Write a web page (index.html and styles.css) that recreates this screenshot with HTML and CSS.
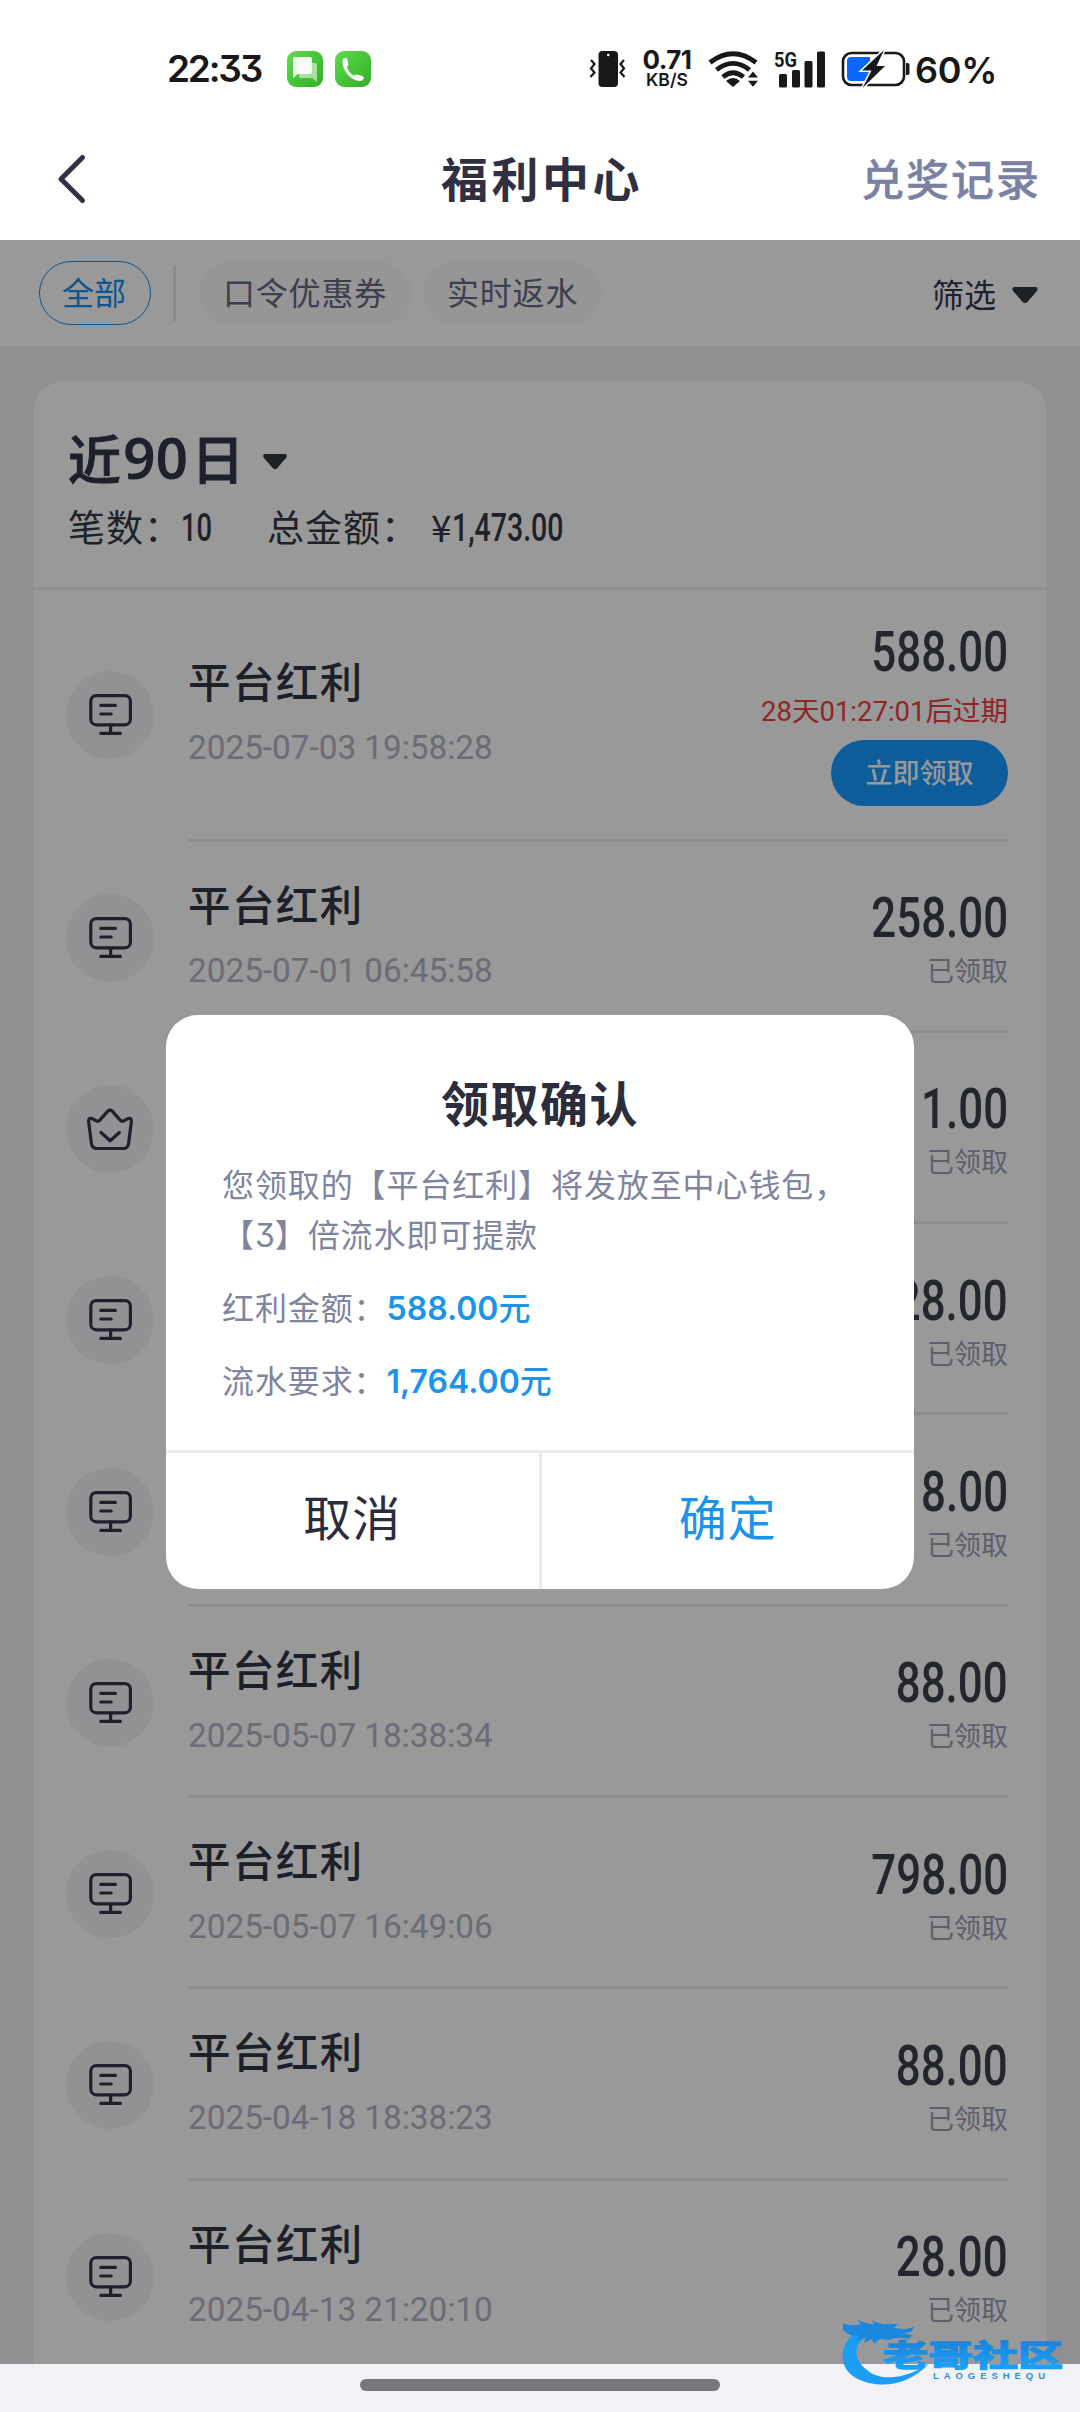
FILE: index.html
```html
<!DOCTYPE html>
<html lang="zh-CN">
<head>
<meta charset="utf-8">
<title>福利中心</title>
<link rel="stylesheet" href="styles.css">
</head>
<body>
<svg class="defs" width="0" height="0">
  <symbol id="monitor" viewBox="0 0 88 88">
    <g fill="none" stroke="#32374a" stroke-width="3.2" stroke-linecap="round">
      <rect x="24.8" y="24.6" width="39.6" height="29.2" rx="5.5"/>
      <path d="M34.8 34.4h14.6M34.8 43h10.4M44.6 54v8.2M34.8 62.4h19.6"/>
    </g>
  </symbol>
  <symbol id="crown" viewBox="0 0 88 88">
    <path d="M27.5 62.5q-1.600-1-2-3.500L22.600 36.500q-.2-4 3.200-3l5 2.600q1.600.500 3-1l8-9q2.200-2.200 4.400 0l8 9q1.400 1.500 3 1l5-2.600q3.400-1 3.200 3L62.500 59q-.400 2.500-2 3.500q-1 1-3 1H30.500q-2 0-3-1zM35 47.500l9.200 8.300 9.200-8.300" fill="none" stroke="#32374a" stroke-width="3.2" stroke-linecap="round" stroke-linejoin="round"/>
  </symbol>
  <symbol id="caret" viewBox="0 0 26 17">
    <path d="M3 2h20q1.500.5.5 2L14.500 14.400q-1.500 1.200-3 0L2.500 4q-1-1.500.5-2z" fill="#32373d" stroke="#32373d" stroke-width="2" stroke-linejoin="round"/>
  </symbol>
</svg>

<header class="status">
  <span class="clock">22:33</span>
  <svg class="apps" width="86" height="40" viewBox="0 0 86 40">
    <defs>
      <linearGradient id="green" x1="0" y1="0" x2="1" y2="1"><stop offset="0" stop-color="#5fdc4e"/><stop offset="1" stop-color="#32ad25"/></linearGradient>
    </defs>
    <rect x="1" y="2" width="36" height="36" rx="9" fill="url(#green)"/>
    <path d="M14 14h15q2 0 2 2v17l-5-4H15q-2 0-2-2z" fill="#fff" opacity=".55"/>
    <path d="M9 8h15q2 0 2 2v13q0 2-2 2H12l-5 4V10q0-2 2-2z" fill="#fff" opacity=".93"/>
    <rect x="49" y="2" width="36" height="36" rx="9" fill="url(#green)"/>
    <path d="M56.500 11q.5-2 2.800-2.300 1.700 0 2.200 1.800l.8 5q0 1.500-1.500 2.500 2 6 7.500 8.700 1.500-1.500 3-1.200l5 1.600q2 .8 1.500 2.300-1 2.500-4.500 2.600C64 31 56 21 56.500 11z" fill="#fff"/>
  </svg>
  <span class="grow"></span>
  <svg class="vibrate" width="38" height="38" viewBox="0 0 38 38">
    <rect x="9.500" y="1" width="19.500" height="36" rx="4" fill="#181818"/><circle cx="19.300" cy="5" r="1.300" fill="#fff"/>
    <path d="M2 10l3.500 4L2 18.500l3.500 4L1.500 27M35 10l-3.500 4 3.500 4.500-3.500 4 4 4.500" fill="none" stroke="#181818" stroke-width="2.200"/>
  </svg>
  <span class="speed"><b>0.71</b><small>KB/S</small></span>
  <svg class="wifi" width="52" height="38" viewBox="0 0 52 38">
    <g fill="none" stroke="#181818" stroke-width="4.800"><path d="M2 12.500Q25 -5 48 12.500"/><path d="M8.500 19.800Q25 7 41.500 19.800"/><path d="M14.800 27Q25 18.500 35.500 27"/></g>
    <path d="M18 31q7-6 14 0l-7 6zM40 27.500l5-6 5 6zM40 30.800l5 6 5-6z" fill="#181818"/>
  </svg>
  <svg class="signal" width="54" height="40" viewBox="0 0 54 40">
    <text x="1" y="17.500" font-family="Roboto" font-size="21" font-weight="700" textLength="23" lengthAdjust="spacingAndGlyphs" fill="#181818">5G</text>
    <path d="M7.500 25h5q1.500 0 1.500 1.500V37q0 1.500-1.500 1.500h-5Q6 38.500 6 37V26.500Q6 25 7.500 25zM20.500 21h5q1.500 0 1.500 1.500V37q0 1.500-1.500 1.500h-5Q19 38.500 19 37V22.500q0-1.500 1.500-1.500zM33 12h5q1.500 0 1.500 1.500V37q0 1.500-1.500 1.500h-5q-1.500 0-1.500-1.500V13.500Q31.500 12 33 12zM45.500 2.500h5Q52 2.500 52 4v33q0 1.500-1.500 1.500h-5Q44 38.500 44 37V4q0-1.500 1.500-1.500z" fill="#181818"/>
  </svg>
  <svg class="battery" width="70" height="40" viewBox="0 0 70 40">
    <rect x="2" y="4" width="61" height="32" rx="8.500" fill="#fff" stroke="#181818" stroke-width="2.600"/>
    <path d="M65 14h1.500q2 0 2 2v8q0 2-2 2H65z" fill="#181818"/>
    <path d="M10 8h19v24H10q-4 0-4-4V12q0-4 4-4z" fill="#0a66ff"/>
    <path d="M43 1L21 21.500h9.500L21.500 39 44 17h-8.500z" fill="#181818" stroke="#fff" stroke-width="3" paint-order="stroke"/>
  </svg>
  <span class="percent">60%</span>
</header>

<nav class="navbar">
  <svg width="34" height="52" viewBox="0 0 34 52"><path d="M28.500 4.500L7 26l21.500 21.500" fill="none" stroke="#2f3142" stroke-width="5" stroke-linecap="round" stroke-linejoin="round"/></svg>
  <h1>福利中心</h1>
  <a class="history">兑奖记录</a>
</nav>

<main class="content">
  <section class="filters">
    <span class="pill active">全部</span>
    <i class="sep"></i>
    <span class="pill">口令优惠券</span>
    <span class="pill">实时返水</span>
    <span class="filter">筛选<svg width="28" height="18"><use href="#caret"/></svg></span>
  </section>

  <section class="card">
    <div class="summary">
      <div class="range">近<b>90</b>日<svg width="26" height="17"><use href="#caret"/></svg></div>
      <div class="totals"><span>笔数：</span><span class="num n1">10</span><span class="total">总金额：</span><span class="yen">¥</span><span class="num n2">1,473.00</span></div>
    </div>

    <article class="row first"><svg class="ico"><use href="#monitor"/></svg>
      <div class="body"><div class="info"><h3>平台红利</h3><time>2025-07-03 19:58:28</time></div>
      <div class="side"><strong>588.00</strong><em>28天01:27:01后过期</em><button>立即领取</button></div></div></article>
    <article class="row"><svg class="ico"><use href="#monitor"/></svg>
      <div class="body"><div class="info"><h3>平台红利</h3><time>2025-07-01 06:45:58</time></div>
      <div class="side"><strong>258.00</strong><span>已领取</span></div></div></article>
    <article class="row"><svg class="ico"><use href="#crown"/></svg>
      <div class="body"><div class="info"></div>
      <div class="side"><strong>1.00</strong><span>已领取</span></div></div></article>
    <article class="row"><svg class="ico"><use href="#monitor"/></svg>
      <div class="body"><div class="info"></div>
      <div class="side"><strong>28.00</strong><span>已领取</span></div></div></article>
    <article class="row"><svg class="ico"><use href="#monitor"/></svg>
      <div class="body"><div class="info"></div>
      <div class="side"><strong>8.00</strong><span>已领取</span></div></div></article>
    <article class="row"><svg class="ico"><use href="#monitor"/></svg>
      <div class="body"><div class="info"><h3>平台红利</h3><time>2025-05-07 18:38:34</time></div>
      <div class="side"><strong>88.00</strong><span>已领取</span></div></div></article>
    <article class="row"><svg class="ico"><use href="#monitor"/></svg>
      <div class="body"><div class="info"><h3>平台红利</h3><time>2025-05-07 16:49:06</time></div>
      <div class="side"><strong>798.00</strong><span>已领取</span></div></div></article>
    <article class="row"><svg class="ico"><use href="#monitor"/></svg>
      <div class="body"><div class="info"><h3>平台红利</h3><time>2025-04-18 18:38:23</time></div>
      <div class="side"><strong>88.00</strong><span>已领取</span></div></div></article>
    <article class="row"><svg class="ico"><use href="#monitor"/></svg>
      <div class="body"><div class="info"><h3>平台红利</h3><time>2025-04-13 21:20:10</time></div>
      <div class="side"><strong>28.00</strong><span>已领取</span></div></div></article>
  </section>

  <div class="overlay">
    <div class="dialog">
      <div class="message">
        <h2>领取确认</h2>
        <p>您领取的【平台红利】将发放至中心钱包，<br>【<i>3</i>】倍流水即可提款</p>
        <p class="line">红利金额：<b>588.00<span>元</span></b></p>
        <p class="line">流水要求：<b>1,764.00<span>元</span></b></p>
      </div>
      <div class="actions"><a>取消</a><a class="ok">确定</a></div>
    </div>
  </div>
</main>

<footer class="home"><i></i></footer>

<svg class="watermark" width="236" height="90" viewBox="0 0 236 90">
  <defs>
    <linearGradient id="blue" x1="0" y1="0" x2="0" y2="1"><stop offset="0" stop-color="#1a78cf"/><stop offset="1" stop-color="#1aa8ff"/></linearGradient>
  </defs>
  <path d="M24 12C-2 24-4 52 16 63c22 12 54 8 74-16-16 14-48 22-63 8C12 44 12 26 34 18z" fill="#1e9df5"/>
  <path d="M3 8q8 4 18 1l-4-5q10 6 17 5l-2-4q8 5 16 4l10 0-4 4q8 1 12 1l8-2-3 5-8 1 9 2-3 4q-12-3-20 1l-9-1-6 5-2-5-8 4 2-6-10 4 3-6q-10 2-16-5z" fill="#1b87dd"/>
  <text class="wm-name" x="43" y="50.500" textLength="180" lengthAdjust="spacingAndGlyphs" fill="url(#blue)" stroke="url(#blue)">老哥社区</text>
  <text class="wm-sub" x="93" y="63.500" textLength="112" fill="#2f8fdc">LAOGESHEQU</text>
</svg>
</body>
</html>
```
FILE: styles.css
```css
* { box-sizing: border-box; margin: 0; padding: 0; }
body {
  position: relative;
  width: 1080px; height: 2412px;
  display: flex; flex-direction: column;
  overflow: hidden;
  background: #fff;
  font-family: "Noto Sans CJK SC", "Noto Sans", sans-serif;
  color: #32374a;
}
i, em { font-style: normal; }
svg { display: block; flex: none; }
.defs { position: absolute; }

.status { height: 138px; padding: 0 81px 0 167px; display: flex; align-items: center; color: #181818; font-family: Inter, sans-serif; }
.clock { width: 119px; padding-bottom: 1px; font-size: 37px; font-weight: 600; letter-spacing: -2.2px; font-feature-settings: "cv09"; }
.grow { flex: 1; }
.vibrate { margin-right: 14px; }
.speed { width: 52px; display: flex; flex-direction: column; align-items: center; padding-top: 2px; }
.speed b { font-size: 26px; line-height: 20px; font-weight: 700; letter-spacing: -.5px; }
.speed small { font-size: 17.500px; line-height: 20px; font-weight: 600; }
.wifi { margin-left: 15px; }
.signal { margin-left: 13px; }
.battery { margin-left: 14px; }
.percent { width: 84px; margin-left: 4px; padding-top: 2px; font-size: 36px; font-weight: 600; letter-spacing: -.3px; white-space: nowrap; }

.navbar { height: 102px; padding: 0 39px 24px 54px; display: grid; grid-template-columns: 200px 1fr 200px; align-items: center; }
.navbar svg { margin-top: 4px; }
.navbar h1 { padding-right: 11px; text-align: center; font-size: 47px; line-height: 66px; font-weight: 700; letter-spacing: 3.500px; color: #2f3142; }
.history { text-align: right; font-size: 43px; line-height: 66px; font-weight: 500; letter-spacing: 2px; white-space: nowrap; color: #7b81a3; -webkit-text-stroke: .4px #7b81a3; }

.content { position: relative; height: 2124px; overflow: hidden; background: #f0f0f5; }
.filters { height: 106px; padding: 0 41px 0 39px; display: flex; align-items: center; background: #fff; font-size: 32px; }
.pill { height: 64px; padding: 0 24px; border-radius: 32px; line-height: 60px; letter-spacing: .8px; background: #fafafb; color: #666980; }
.pill + .pill { margin-left: 12px; }
.pill.active { background: #fff; border: 1.500px solid #1690ee; line-height: 58px; padding: 0 22px; width: 112px; color: #1690ee; letter-spacing: 0; }
.sep { width: 3px; height: 56px; margin: 0 23px 0 22px; background: #e8e8ee; }
.filter { margin-left: auto; display: flex; align-items: center; gap: 15px; color: #32374a; line-height: 58px; }
.filter svg { margin-top: 4px; }

.card { margin: 35px 33px 0; border-radius: 32px 32px 0 0; background: #fff; }
.summary { height: 209px; padding: 41px 35px 0; border-bottom: 3px solid #eeeef2; }
.range { display: flex; align-items: center; height: 70px; font-size: 53px; font-weight: 500; line-height: 64px; -webkit-text-stroke: 1px #32374a; }
.range b { font-family: "Noto Sans", sans-serif; font-size: 57px; font-weight: 600; margin: 0 3px 0 2px; -webkit-text-stroke: 0; }
.range svg { margin: 9px 0 0 18px; }
.totals { display: flex; align-items: center; height: 60px; margin-top: 4px; font-size: 37px; line-height: 56px; letter-spacing: 1px; color: #353945; }
.num { font-family: Roboto, sans-serif; font-weight: 500; font-size: 38px; letter-spacing: 0; padding-top: 3px; transform-origin: left; transform: scaleX(.72); }
.n1 { width: 86px; margin-left: -1px; }
.n2 { transform: scaleX(.75); }
.yen { margin-left: 12px; margin-right: -1px; }

.row { height: 191.300px; padding: 0 39px 0 33px; display: flex; align-items: center; }
.row.first { height: 251.500px; }
.ico { width: 88px; height: 88px; border-radius: 44px; background: #f3f3f8; margin-top: 1px; }
.first .ico { margin-top: -1px; }
.body { flex: 1; height: 100%; margin-left: 34px; display: flex; align-items: center; justify-content: space-between; border-bottom: 3px solid #ececf0; }
.row:last-child .body { border-color: transparent; }
.info { padding-top: 5px; }
.first .info { padding-top: 3px; }
.info h3 { font-size: 42.500px; line-height: 62px; font-weight: 500; letter-spacing: 1.400px; color: #313644; }
.info time { display: block; padding-top: 3px; font-family: Roboto, sans-serif; font-size: 33.300px; line-height: 68px; color: #b2b4c4; }
.side { display: flex; flex-direction: column; align-items: flex-end; padding-top: 7px; }
.first .side { padding-top: 0; }
.side strong { font-family: Roboto, sans-serif; font-size: 55.500px; line-height: 60px; font-weight: 500; color: #3d404e; transform-origin: right; transform: translateY(1px) scaleX(.79); }
.side span { font-size: 27px; line-height: 40px; margin-top: 2px; color: #9b9eb2; }
.side em { font-family: Roboto, "Noto Sans CJK SC", sans-serif; font-size: 27.500px; line-height: 40px; margin-top: 10px; color: #f03c42; }
.side button { width: 177px; height: 66px; margin-top: 8px; padding-bottom: 3px; border: 0; border-radius: 33px; background: #149cff; color: #fff; font: 500 27px "Noto Sans CJK SC", sans-serif; }

.overlay { position: absolute; inset: 0; display: flex; align-items: center; justify-content: center; background: rgba(0,0,0,.4); }
.dialog { width: 748px; height: 574px; border-radius: 32px; overflow: hidden; background: #fff; display: flex; flex-direction: column; }
.message { flex: 1; padding: 51px 50px 0 56px; color: #7f849f; }
.message h2 { padding-right: 6px; text-align: center; font-size: 48px; line-height: 70px; font-weight: 700; letter-spacing: 1.500px; color: #2b2d3c; }
.message p { font-size: 32px; line-height: 50px; letter-spacing: .9px; margin-top: 22px; white-space: nowrap; }
.message .line { margin-top: 19px; line-height: 52px; }
.message .line + .line { margin-top: 18px; }
.message i { font-family: Inter, sans-serif; font-feature-settings: "cv09"; letter-spacing: 0; }
.message b { font-family: Inter, sans-serif; font-weight: 600; letter-spacing: 0; color: #1c94ea; }
.message b span { font-family: "Noto Sans CJK SC", sans-serif; font-weight: 500; }
.actions { height: 139px; display: flex; border-top: 3px solid #ececef; }
.actions a { flex: 1; text-align: center; font-size: 48px; line-height: 125px; letter-spacing: 1px; color: #2b2d3c; }
.actions .ok { border-left: 3px solid #ececef; color: #1c94ea; }

.home { flex: 1; display: flex; justify-content: center; align-items: flex-start; padding-top: 15px; background: #f1f1f6; }
.home i { width: 360px; height: 12px; border-radius: 6px; background: #78787b; }

.watermark { position: absolute; right: 4px; bottom: 7px; }
.wm-name { font-family: "Noto Sans CJK SC", sans-serif; font-weight: 700; font-size: 30px; stroke-width: 1.500px; }
.wm-sub { font-family: "Liberation Sans", sans-serif; font-weight: 700; font-size: 9.500px; }
```
